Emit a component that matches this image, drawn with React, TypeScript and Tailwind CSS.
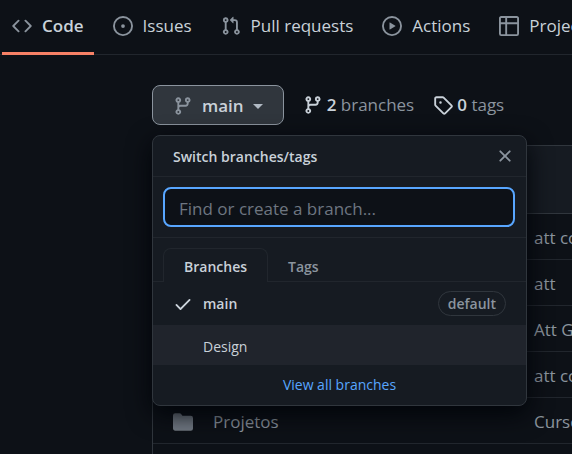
import type { ReactNode } from "react";

const paths = {
  code: "M4.72 3.22a.75.75 0 011.06 1.06L2.06 8l3.72 3.72a.75.75 0 11-1.06 1.06L.47 8.53a.75.75 0 010-1.06l4.25-4.25zm6.56 0a.75.75 0 10-1.06 1.06L13.94 8l-3.72 3.72a.75.75 0 101.06 1.06l4.25-4.25a.75.75 0 000-1.06l-4.25-4.25z",
  issue:
    "M8 9.5a1.5 1.5 0 100-3 1.5 1.5 0 000 3zM8 0a8 8 0 100 16A8 8 0 008 0zM1.5 8a6.5 6.5 0 1113 0 6.5 6.5 0 01-13 0z",
  pull: "M7.177 3.073L9.573.677A.25.25 0 0110 .854v4.792a.25.25 0 01-.427.177L7.177 3.427a.25.25 0 010-.354zM3.75 2.5a.75.75 0 100 1.5.75.75 0 000-1.5zm-2.25.75a2.25 2.25 0 113 2.122v5.256a2.251 2.251 0 11-1.5 0V5.372A2.25 2.25 0 011.5 3.25zM11 2.5h-1V4h1a1 1 0 011 1v5.628a2.251 2.251 0 101.5 0V5A2.5 2.5 0 0011 2.5zm1 10.25a.75.75 0 111.5 0 .75.75 0 01-1.5 0zM3.75 12a.75.75 0 100 1.5.75.75 0 000-1.5z",
  play: "M1.5 8a6.5 6.5 0 1113 0 6.5 6.5 0 01-13 0zM8 0a8 8 0 100 16A8 8 0 008 0zM6.379 5.227A.25.25 0 006 5.442v5.117a.25.25 0 00.379.214l4.264-2.559a.25.25 0 000-.428L6.379 5.227z",
  table:
    "M0 1.75C0 .784.784 0 1.75 0h12.5C15.216 0 16 .784 16 1.75v12.5A1.75 1.75 0 0114.25 16H1.75A1.75 1.75 0 010 14.25V1.75zM1.5 6.5v7.75c0 .138.112.25.25.25H5v-8H1.5zM6.5 6.5v8h7.75a.25.25 0 00.25-.25V6.5h-8zM14.5 5V1.75a.25.25 0 00-.25-.25H6.5V5h8zM5 5V1.5H1.75a.25.25 0 00-.25.25V5H5z",
  branch:
    "M11.75 2.5a.75.75 0 100 1.5.75.75 0 000-1.5zm-2.25.75a2.25 2.25 0 113 2.122V6A2.5 2.5 0 0110 8.5H6a1 1 0 00-1 1v1.128a2.251 2.251 0 11-1.5 0V5.372a2.25 2.25 0 111.5 0v1.836A2.492 2.492 0 016 7h4a1 1 0 001-1v-.628A2.25 2.25 0 019.5 3.25zM4.25 12a.75.75 0 100 1.5.75.75 0 000-1.5zM3.5 3.25a.75.75 0 111.5 0 .75.75 0 01-1.5 0z",
  tag: "M2.5 7.775V2.75a.25.25 0 01.25-.25h5.025a.25.25 0 01.177.073l6.25 6.25a.25.25 0 010 .354l-5.025 5.025a.25.25 0 01-.354 0l-6.25-6.25a.25.25 0 01-.073-.177zm-1.5 0V2.75C1 1.784 1.784 1 2.75 1h5.025c.464 0 .91.184 1.238.513l6.25 6.25a1.75 1.75 0 010 2.474l-5.026 5.026a1.75 1.75 0 01-2.474 0l-6.25-6.25A1.75 1.75 0 011 7.775zM6 5a1 1 0 100 2 1 1 0 000-2z",
  close:
    "M3.72 3.72a.75.75 0 011.06 0L8 6.94l3.22-3.22a.75.75 0 111.06 1.06L9.06 8l3.22 3.22a.75.75 0 11-1.06 1.06L8 9.06l-3.22 3.22a.75.75 0 01-1.06-1.06L6.94 8 3.72 4.78a.75.75 0 010-1.06z",
  check:
    "M13.78 4.22a.75.75 0 010 1.06l-7.25 7.25a.75.75 0 01-1.06 0L2.22 9.28a.75.75 0 011.06-1.06L6 10.94l6.72-6.72a.75.75 0 011.06 0z",
  folder:
    "M1.75 1A1.75 1.75 0 000 2.75v10.5C0 14.216.784 15 1.75 15h12.5A1.75 1.75 0 0016 13.25v-8.5A1.75 1.75 0 0014.25 3h-6.5a.25.25 0 01-.2-.1l-.9-1.2c-.33-.44-.85-.7-1.4-.7h-3.5z",
};

type IconName = keyof typeof paths;

function Icon({ name, className = "" }: { name: IconName; className?: string }) {
  return (
    <svg viewBox="0 0 16 16" aria-hidden="true" className={`size-5 shrink-0 fill-current ${className}`}>
      <path fillRule="evenodd" d={paths[name]} />
    </svg>
  );
}

const tabs: { label: string; icon: IconName; active?: boolean }[] = [
  { label: "Code", icon: "code", active: true },
  { label: "Issues", icon: "issue" },
  { label: "Pull requests", icon: "pull" },
  { label: "Actions", icon: "play" },
  { label: "Projects", icon: "table" },
];

const files = [
  { name: "", commit: "att codigo" },
  { name: "", commit: "att" },
  { name: "", commit: "Att Geral" },
  { name: "", commit: "att codigo" },
  { name: "Projetos", commit: "Curso" },
];

function RepoNav() {
  return (
    <nav className="flex gap-[9px] border-b border-[#21262d] pl-[2px] text-[17px]">
      {tabs.map((tab) => (
        <a
          key={tab.label}
          href="#"
          className={`-mb-px flex h-[55px] shrink-0 items-center gap-[10px] border-b-[3px] px-[10px] ${
            tab.active ? "border-[#f78166] font-semibold" : "border-transparent"
          }`}
        >
          <Icon name={tab.icon} className="text-[#8b949e]" />
          {tab.label}
        </a>
      ))}
    </nav>
  );
}

function Count({ icon, value, children }: { icon: IconName; value: number; children: ReactNode }) {
  return (
    <a href="#" className="flex shrink-0 items-center gap-1 text-[#8b949e]">
      <Icon name={icon} className="text-[#c9d1d9]" />
      <span>
        <strong className="font-semibold text-[#c9d1d9]">{value}</strong> {children}
      </span>
    </a>
  );
}

function BranchMenu() {
  return (
    <div className="absolute top-[50px] left-0 z-10 w-[375px] overflow-hidden rounded-lg border border-[#30363d] bg-[#161b22] text-[14px] shadow-[0_8px_24px_#010409]">
      <div className="flex h-[41px] items-center justify-between border-b border-[#21262d] pr-[11px] pl-5">
        <span className="font-semibold">Switch branches/tags</span>
        <button type="button" aria-label="Close" className="text-[#8b949e]">
          <Icon name="close" />
        </button>
      </div>
      <div className="border-b border-[#21262d] py-[10px] pr-[11px] pl-[10px]">
        <input
          type="text"
          aria-label="Find or create a branch"
          placeholder="Find or create a branch..."
          className="block h-10 w-full rounded-lg border-2 border-[#58a6ff] bg-[#0d1117] px-[14px] pt-[2px] text-[17px] outline-none placeholder:text-[#6e7681]"
        />
      </div>
      <div role="tablist" className="flex border-b border-[#21262d] pt-[10px] pl-[10px] font-semibold">
        <button
          type="button"
          role="tab"
          aria-selected="true"
          className="-mb-px h-[34px] rounded-t-lg border border-b-0 border-[#21262d] bg-[#161b22] px-5 pt-[2px]"
        >
          Branches
        </button>
        <button type="button" role="tab" aria-selected="false" className="h-[33px] px-5 pt-[3px] text-[#8b949e]">
          Tags
        </button>
      </div>
      <a href="#" className="flex h-[43px] items-center gap-[10px] px-5">
        <Icon name="check" />
        <span className="grow font-semibold">main</span>
        <span className="rounded-full border border-[#30363d] px-[9px] leading-[23px] font-semibold text-[#8b949e]">
          default
        </span>
      </a>
      <a href="#" className="flex h-10 items-center bg-[#20242c] pt-[2px] pr-5 pl-[50px]">
        Design
      </a>
      <a href="#" className="flex h-10 items-center justify-center pb-[2px] text-[#58a6ff]">
        View all branches
      </a>
    </div>
  );
}

export default function App() {
  return (
    <div className="min-h-screen overflow-hidden bg-[#0d1117] font-['Open_Sans','Noto_Sans',sans-serif] text-[#c9d1d9]">
      <RepoNav />
      <main className="pt-[30px] pl-[152px] text-[17px]">
        <div className="relative flex items-center gap-[19px]">
          <button
            type="button"
            className="flex h-10 shrink-0 items-center gap-[9px] rounded-lg border border-[#8b949e] bg-[#30363d] px-5 pt-[2px] font-semibold"
          >
            <Icon name="branch" className="text-[#8b949e]" />
            main
            <span className="border-x-[5px] border-t-[5px] border-x-transparent border-t-[#b1bac4]" />
          </button>
          <Count icon="branch" value={2}>
            branches
          </Count>
          <Count icon="tag" value={0}>
            tags
          </Count>
          <BranchMenu />
        </div>
        <div className="mt-5 overflow-hidden rounded-l-lg border-y border-l border-[#30363d]">
          <div className="h-[67px] bg-[#161b22]" />
          <table className="w-full table-fixed border-collapse">
            <tbody>
              {files.map((file, i) => (
                <tr key={i} className="h-[46px] border-t border-[#21262d] first:border-[#30363d]">
                  <td className="w-[381px] p-0 pt-[2px] pl-5">
                    <div className="flex items-center gap-5 text-[#8b949e]">
                      <Icon name="folder" className="opacity-80" />
                      {file.name}
                    </div>
                  </td>
                  <td className="p-0 pt-[2px] whitespace-nowrap text-[#8b949e]">{file.commit}</td>
                </tr>
              ))}
              <tr className="h-[46px] border-t border-[#21262d]" />
            </tbody>
          </table>
        </div>
      </main>
    </div>
  );
}
